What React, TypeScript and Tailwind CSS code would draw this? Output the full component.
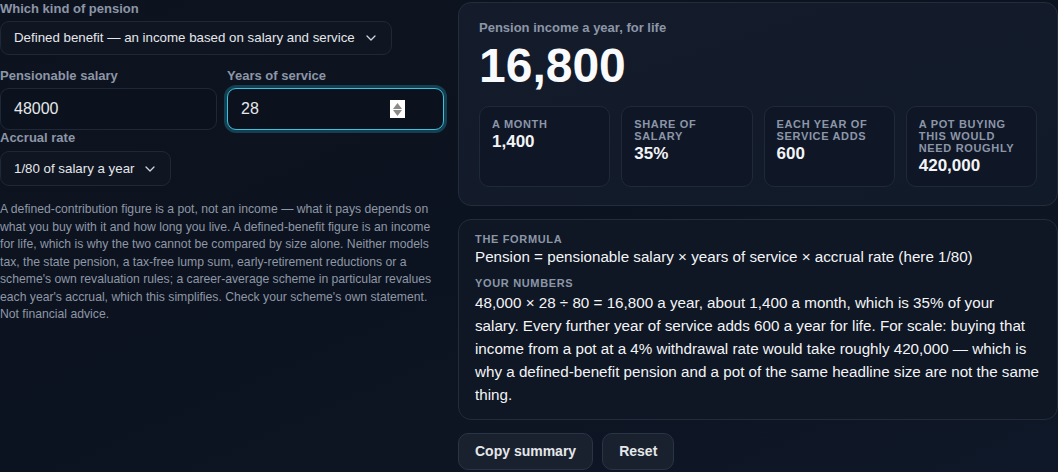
import { useState } from "react";

function Chevron() {
  return (
    <svg width="10" height="6" viewBox="0 0 10 6" fill="none" className="shrink-0">
      <path d="M1 1l4 4 4-4" stroke="#cbd5e1" strokeWidth="1.3" strokeLinecap="round" strokeLinejoin="round" />
    </svg>
  );
}

function Label({ children }: { children: React.ReactNode }) {
  return <div className="text-[13px] font-bold leading-4 text-[#8c96a7]">{children}</div>;
}

function Stat({ label, value }: { label: string; value: string }) {
  return (
    <div className="rounded-[10px] border border-[#1f2937] bg-[#0f1727] px-3 pt-[11px] pb-[10px]">
      <div className="text-[11px] font-bold uppercase leading-3 tracking-[0.06em] text-[#8c96a7]">{label}</div>
      <div className="mt-[2px] text-[17px] font-bold leading-5 text-[#f3f4f6]">{value}</div>
    </div>
  );
}

export default function App() {
  const [salary, setSalary] = useState("48000");
  const [years, setYears] = useState("28");

  return (
    <main
      className="min-h-[472px] w-full overflow-hidden bg-gradient-to-br from-[#0d131e] via-[#0c1320] to-[#0f1828] text-[#e5e7eb]"
      style={{ fontFamily: '"Liberation Sans", Arial, sans-serif' }}
    >
      <div className="grid grid-cols-[444px_600px] gap-[14px] pt-px">
        {/* left: inputs */}
        <section>
          <Label>Which kind of pension</Label>
          <button className="mt-1 inline-flex h-[34px] items-center gap-[11px] rounded-[9px] border border-[#1e2837] bg-[#0f1622] pl-[13px] pr-[15px] text-[13.3px] text-[#e5e7eb]">
            Defined benefit — an income based on salary and service
            <Chevron />
          </button>

          <div className="mt-[13px] grid grid-cols-2 gap-[10px]">
            <div>
              <Label>Pensionable salary</Label>
              <input
                value={salary}
                onChange={(e) => setSalary(e.target.value)}
                className="mt-1 h-[42px] w-full rounded-[9px] border border-[#1e2837] bg-[#0c121d] px-[13px] text-[16px] text-[#e5e7eb] outline-none"
              />
            </div>
            <div>
              <Label>Years of service</Label>
              <div className="relative mt-1">
                <input
                  value={years}
                  onChange={(e) => setYears(e.target.value)}
                  className="h-[42px] w-full rounded-[9px] border border-[#3cc0dc] bg-[#0c121d] px-[13px] text-[16px] text-[#e5e7eb] shadow-[0_0_0_3px_rgba(34,150,180,0.35)] outline-none"
                />
                <div className="absolute left-[163px] top-[12px] flex h-[18px] w-[15px] flex-col items-center justify-center gap-[1px] bg-white">
                  <svg width="9" height="6" viewBox="0 0 9 6"><path d="M4.5 0L9 6H0z" fill="#8a8a8a" /></svg>
                  <svg width="9" height="6" viewBox="0 0 9 6"><path d="M0 0h9L4.5 6z" fill="#8a8a8a" /></svg>
                </div>
              </div>
            </div>
          </div>

          <Label>Accrual rate</Label>
          <button className="mt-[5px] inline-flex h-[35px] items-center gap-[11px] rounded-[9px] border border-[#1e2837] bg-[#0f1622] pl-[13px] pr-[15px] text-[13.3px] text-[#e5e7eb]">
            1/80 of salary a year
            <Chevron />
          </button>

          <p className="mt-[15px] text-[12.2px] leading-[17.5px] text-[#8e97a6]">
            A defined-contribution figure is a pot, not an income — what it pays depends on what you buy with it and
            how long you live. A defined-benefit figure is an income for life, which is why the two cannot be compared
            by size alone. Neither models tax, the state pension, a tax-free lump sum, early-retirement reductions or a
            scheme's own revaluation rules; a career-average scheme in particular revalues each year's accrual, which
            this simplifies. Check your scheme's own statement. Not financial advice.
          </p>
        </section>

        {/* right: results */}
        <section className="flex flex-col gap-[13px] pt-px">
          <div className="rounded-[13px] border border-[#222c3b] bg-gradient-to-br from-[#141c2b] to-[#111a29] px-5 pt-[17px] pb-[18px]">
            <div className="text-[13px] font-bold leading-4 text-[#8c96a7]">Pension income a year, for life</div>
            <div className="mt-[6px] text-[48px] font-bold leading-none text-[#f9fafb]">16,800</div>
            <div className="mt-[16px] grid grid-cols-4 gap-[11px]">
              <Stat label="A month" value="1,400" />
              <Stat label="Share of salary" value="35%" />
              <Stat label="Each year of service adds" value="600" />
              <Stat label="A pot buying this would need roughly" value="420,000" />
            </div>
          </div>

          <div className="rounded-[13px] border border-[#222c3b] bg-[#0f1624] px-4 pt-[12px] pb-[13px]">
            <div className="text-[11px] font-bold uppercase leading-[15px] tracking-[0.06em] text-[#8c96a7]">The formula</div>
            <div className="text-[15.2px] leading-5 text-[#f3f4f6]">
              Pension = pensionable salary × years of service × accrual rate (here 1/80)
            </div>
            <div className="mt-[9px] text-[11px] font-bold uppercase leading-[15px] tracking-[0.06em] text-[#8c96a7]">Your numbers</div>
            <p className="text-[15.2px] leading-[23px] text-[#f3f4f6]">
              48,000 × 28 ÷ 80 = 16,800 a year, about 1,400 a month, which is 35% of your salary. Every further year of
              service adds 600 a year for life. For scale: buying that income from a pot at a 4% withdrawal rate would
              take roughly 420,000 — which is why a defined-benefit pension and a pot of the same headline size are not
              the same thing.
            </p>
          </div>

          <div className="flex gap-[9px]">
            <button className="h-[37px] rounded-[10px] border border-[#2a3444] bg-[#19212e] px-4 text-[14px] font-bold text-[#e5e7eb]">
              Copy summary
            </button>
            <button className="h-[37px] rounded-[10px] border border-[#2a3444] bg-[#19212e] px-4 text-[14px] font-bold text-[#e5e7eb]">
              Reset
            </button>
          </div>
        </section>
      </div>
    </main>
  );
}
